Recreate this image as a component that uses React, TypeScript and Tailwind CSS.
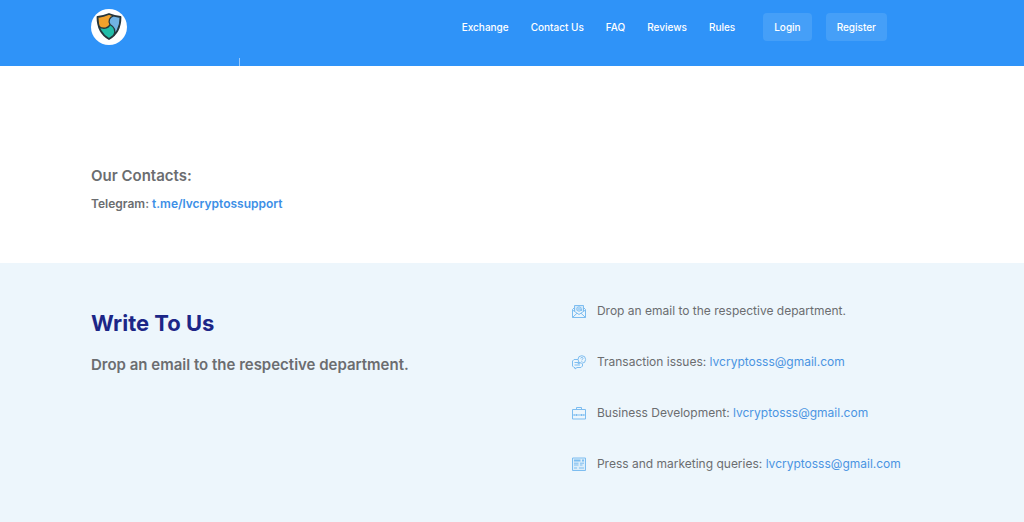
import React from 'react';

const navLinks = ['Exchange', 'Contact Us', 'FAQ', 'Reviews', 'Rules'];

const Logo = () => (
  <svg viewBox="0 0 36 36" className="w-9 h-9" role="img" aria-label="Home">
    <circle cx="18" cy="18" r="18" fill="#fff" />
    <path d="M6.5 8C11 7.5 14.5 6.5 18 5C19.5 5.6 21 6.2 22.5 6.8C18.5 8 17 12 19 15.5C17.5 19.5 12 20.5 8 17.5C7 14.5 6.5 11.5 6.5 8Z" fill="#f2a12b" />
    <path d="M22.5 6.8C25 7.4 27 7.8 29.5 8C29.5 16 27.5 22 22.8 26.5C25 22 23.5 18 19 15.5C17 12 18.5 8 22.5 6.8Z" fill="#71b3e3" />
    <path d="M8 17.5C12 20.5 17.5 19.5 19 15.5C23.5 18 25 22 22.8 26.5C21.3 28 19.7 29 18 30C13 27.2 9.7 23.2 8 17.5Z" fill="#22bda8" />
    <path
      d="M6.5 8C11 7.5 14.5 6.5 18 5C21.5 6.5 25 7.5 29.5 8C29.5 18.5 26 25.5 18 30C10 25.5 6.5 18.5 6.5 8Z"
      fill="none"
      stroke="#26363c"
      strokeWidth="1.8"
      strokeLinejoin="round"
    />
    <path
      d="M22.5 6.8C18.5 8 17 12 19 15.5C17.5 19.5 12 20.5 8 17.5M19 15.5C23.5 18 25 22 22.8 26.5"
      fill="none"
      stroke="#26363c"
      strokeWidth="1.3"
    />
  </svg>
);

const Icon = ({ children }: { children: React.ReactNode }) => (
  <svg
    viewBox="0 0 16 16"
    className="w-4 h-4 shrink-0"
    fill="none"
    stroke="#7dbdf0"
    strokeWidth="1"
    strokeLinejoin="round"
    aria-hidden="true"
  >
    {children}
  </svg>
);

const MailIcon = () => (
  <Icon>
    <path d="M3.5 4.5L1.5 6.5V14.5H14.5V6.5L12.5 4.5M1.5 7L8 11.5L14.5 7M1.5 14.5L6 10.2M14.5 14.5L10 10.2" />
    <path d="M3.5 8V2.5H12.5V8" fill="#d5eafa" />
    <circle cx="8" cy="6" r="2.2" />
    <path d="M8 5V7M10.2 6V7.5H11" />
  </Icon>
);

const QuestionIcon = () => (
  <Icon>
    <path d="M7 5.5H3L1.5 7V12L3 13.5H4V15L6 13.5H10L11.5 12V10" />
    <path d="M3.5 8.5H7M3.5 11H9" />
    <circle cx="10.8" cy="5.5" r="3.8" />
    <path d="M9.7 4.5C9.7 3 12 3 12 4.5C12 5.2 10.8 5.4 10.8 6.3M10.8 7.2V8M7.8 8L7 9.8L9.2 9" />
  </Icon>
);

const BriefcaseIcon = () => (
  <Icon>
    <path d="M5.5 4.5V2.5H10.5V4.5M1.5 4.5H14.5V14H1.5Z" />
    <path d="M1.5 10H4M5.5 10H10.5M12 10H14.5M4 9V11M5.5 9V11M10.5 9V11M12 9V11" />
  </Icon>
);

const NewsIcon = () => (
  <Icon>
    <path d="M1.5 2H14.5V14.5H1.5Z" fill="#dceefa" />
    <path d="M3 4.5H9.5M11 4.5H13" strokeWidth="2" />
    <path d="M3 7.2H7.5M3 9H7.5M9 7.2H13M9 9H11.5M3 12H6M8 12H13" />
  </Icon>
);

const departments = [
  { icon: <MailIcon />, label: 'Drop an email to the respective department.' },
  { icon: <QuestionIcon />, label: 'Transaction issues:', email: 'lvcryptosss@gmail.com' },
  { icon: <BriefcaseIcon />, label: 'Business Development:', email: 'lvcryptosss@gmail.com' },
  { icon: <NewsIcon />, label: 'Press and marketing queries:', email: 'lvcryptosss@gmail.com' },
];

const Header = () => (
  <header className="bg-[#2f93f8] text-white">
    <div className="max-w-[842px] mx-auto h-[66px] flex">
      <a href="#" className="pt-[9px]">
        <Logo />
      </a>
      <span className="ml-28 w-px h-2 self-end bg-white/50"></span>
      <nav className="ml-auto mr-[46px] mt-[13px] h-7 flex items-center text-[10px] font-medium">
        <div className="flex gap-[22px] mr-7">
          {navLinks.map((link) => (
            <a key={link} href="#" className="whitespace-nowrap">
              {link}
            </a>
          ))}
        </div>
        <div className="flex gap-[14px]">
          <button type="button" className="h-7 px-[11px] rounded bg-[#459ff8]">
            Login
          </button>
          <button type="button" className="h-7 px-[11px] rounded bg-[#459ff8]">
            Register
          </button>
        </div>
      </nav>
    </div>
  </header>
);

const App = () => {
  return (
    <div className="min-h-screen flex flex-col bg-white text-[#6b6d70] font-[Inter,sans-serif]">
      <Header />

      <section className="pt-[100px] pb-[49px]">
        <div className="max-w-[842px] mx-auto">
          <h2 className="text-[15px] leading-5 font-semibold">Our Contacts:</h2>
          <p className="mt-2 text-[12px] leading-5 font-semibold">
            Telegram:{' '}
            <a href="#" className="text-[#3d8fe6]">
              t.me/lvcryptossupport
            </a>
          </p>
        </div>
      </section>

      <section className="grow bg-[#edf6fc]">
        <div className="max-w-[842px] mx-auto grid grid-cols-[57fr_43fr] pt-[38px] pb-12">
          <div className="pt-2">
            <h1 className="text-[22px] leading-7 font-bold text-[#1c2687]">Write To Us</h1>
            <h3 className="mt-[18px] text-[15px] leading-5 font-semibold">
              Drop an email to the respective department.
            </h3>
          </div>
          <ul className="flex flex-col gap-[31px]">
            {departments.map(({ icon, label, email }) => (
              <li key={label} className="flex items-center gap-[10px] text-[12px] leading-5 whitespace-nowrap">
                {icon}
                <span>
                  {label}{' '}
                  {email && (
                    <a href="#" className="text-[#4a94e2]">
                      {email}
                    </a>
                  )}
                </span>
              </li>
            ))}
          </ul>
        </div>
      </section>
    </div>
  );
};

export default App;
